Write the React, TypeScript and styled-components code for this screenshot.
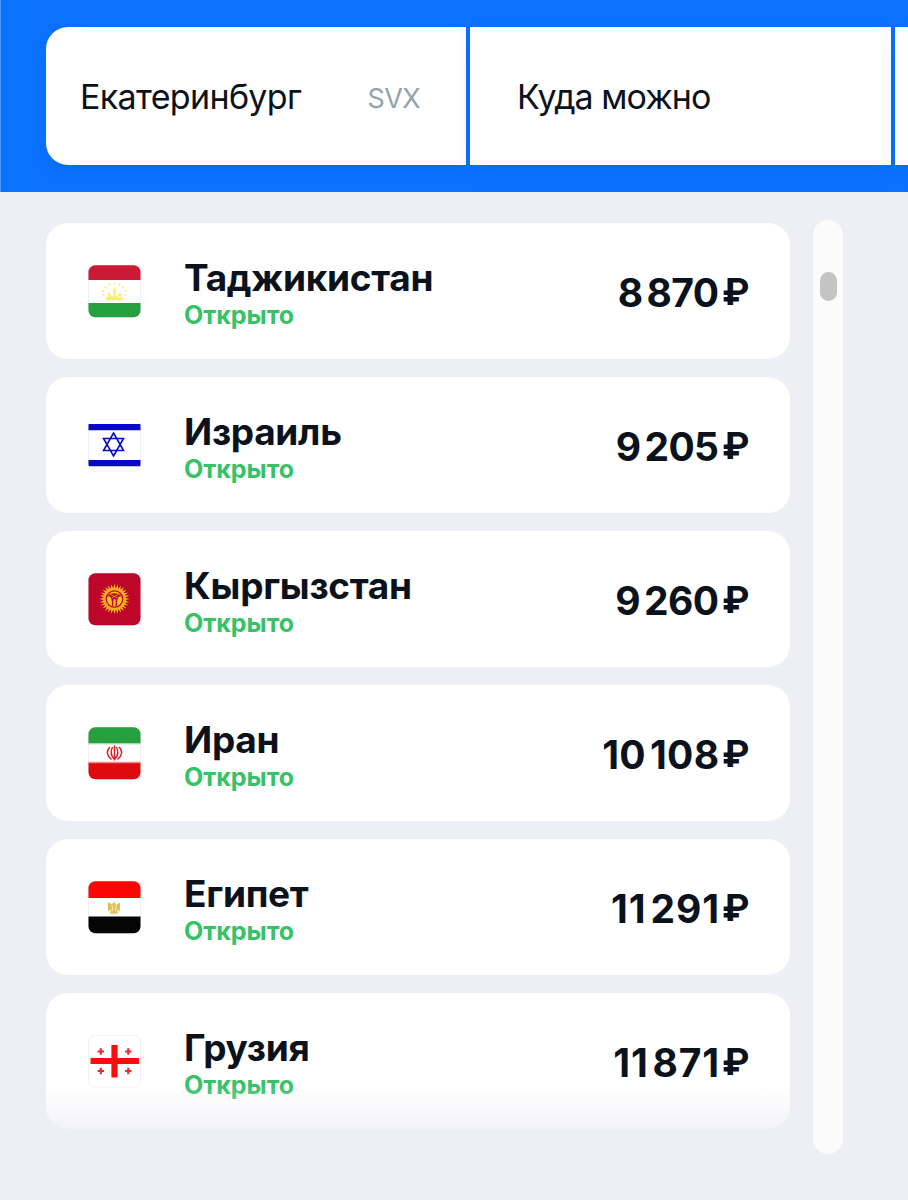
import React from "react";
import styled, { createGlobalStyle } from "styled-components";

const GlobalStyle = createGlobalStyle`
  * { box-sizing: border-box; }
  body {
    margin: 0;
    overflow: hidden;
    background: #eeeff4;
    font-family: Inter, "Liberation Sans", sans-serif;
    color: #0b121c;
  }
`;

const Page = styled.div`
  width: 908px;
  height: 1200px;
  overflow: hidden;
  display: flex;
  flex-direction: column;
  background: #eeeff4;
`;

const SearchBar = styled.header`
  flex: none;
  display: flex;
  gap: 4px;
  height: 192px;
  padding: 27px 0 27px 45px;
  background: #0b72ff;
  border-left: 1px solid #4c9aff;
  overflow: hidden;
`;

const Field = styled.div<{ $first?: boolean; $inset: number }>`
  flex: none;
  width: ${(p) => (p.$first ? 420 : 421)}px;
  height: 138px;
  padding: 2px 46px 0 ${(p) => p.$inset}px;
  display: flex;
  align-items: center;
  justify-content: space-between;
  background: #fff;
  border-radius: ${(p) => (p.$first ? "22px 0 0 22px" : "0")};
  box-shadow: 0 8px 18px -4px rgba(10, 70, 150, 0.2);
`;

const FieldText = styled.span<{ $spacing: number }>`
  font-size: 34px;
  line-height: 40px;
  letter-spacing: ${(p) => p.$spacing}px;
  white-space: nowrap;
`;

const AirportCode = styled.span`
  padding-top: 3px;
  font-size: 27px;
  line-height: 32px;
  letter-spacing: -0.6px;
  color: #92a3ad;
`;

const Content = styled.main`
  display: flex;
  align-items: flex-start;
  gap: 23px;
  padding: 28px 0 0 46px;
`;

const List = styled.ul`
  position: relative;
  width: 744px;
  margin: 0;
  padding: 3px 0 16px;
  list-style: none;
  display: flex;
  flex-direction: column;
  gap: 18px;
`;

const BottomFade = styled.div`
  position: absolute;
  left: 0;
  right: 0;
  bottom: 0;
  height: 60px;
  background: linear-gradient(
    rgba(238, 239, 244, 0),
    rgba(238, 239, 244, 0.3) 35%,
    rgba(238, 239, 244, 0.72) 73%,
    #eeeff4
  );
`;

const Card = styled.li`
  display: flex;
  align-items: center;
  height: 136px;
  padding: 0 41px 0 42px;
  background: #fff;
  border-radius: 22px;
`;

const Flag = styled.svg`
  flex: none;
  width: 53px;
  height: 53px;
`;

const Country = styled.div`
  flex: 1;
  padding: 3px 0 0 43px;
  display: flex;
  flex-direction: column;
`;

const Name = styled.span`
  font-size: 37px;
  line-height: 44px;
  font-weight: 650;
  letter-spacing: -0.3px;
`;

const Status = styled.span`
  font-size: 25px;
  line-height: 30px;
  font-weight: 660;
  letter-spacing: 0;
  color: #37c268;
`;

const Price = styled.div`
  display: flex;
  align-items: center;
  padding-top: 3px;
  font-size: 39px;
  line-height: 46px;
  font-weight: 700;
  white-space: nowrap;
`;

const Digits = styled.span<{ $spacing: number }>`
  letter-spacing: ${(p) => p.$spacing}px;
  margin-right: ${(p) => 3 - p.$spacing}px;
`;

const Group = styled.span`
  margin-right: 4px;
`;

const Ruble = styled.span`
  padding-bottom: 1px;
  font-size: 37px;
  line-height: 44px;
  letter-spacing: -0.5px;
`;

const Track = styled.div`
  width: 30px;
  height: 934px;
  padding: 52px 6px 0 7px;
  border-radius: 15px;
  background: #fbfbfc;
`;

const Thumb = styled.div`
  width: 17px;
  height: 29px;
  border-radius: 9px;
  background: #c4c4c5;
`;

const Stripes = ({ colors, heights }: { colors: string[]; heights: number[] }) => {
  let y = 0;
  return (
    <>
      {colors.map((c, i) => {
        const top = y;
        y += heights[i];
        return <rect key={i} x="0" y={top} width="53" height={heights[i]} fill={c} />;
      })}
    </>
  );
};

const Tajikistan = () => (
  <>
    <Stripes colors={["#cb1a36", "#fff", "#27a03f"]} heights={[15, 23, 15]} />
    <g fill="#f8f070">
      <path d="M18 32q8-2 17 0l-.5 3.500q-8-1-16 0zM25 25l1.500-3 1.500 3-.5 7h-2zM19.500 28q3-1 4 4l-3 .5zM33.500 28q-3-1-4 4l3 .5z" />
      {[[15.5, 30], [15, 26], [17.5, 22], [21.5, 19.5], [26.5, 18.5], [31.5, 19.5], [35.5, 22], [38, 26], [37.5, 30]].map(
        ([x, y]) => <circle key={`${x}-${y}`} cx={x} cy={y} r="1.1" />
      )}
    </g>
  </>
);

const Israel = () => (
  <>
    <Stripes colors={["#fff", "#0909c4", "#fff", "#0909c4", "#fff"]} heights={[5, 6.5, 29.5, 6.5, 5.5]} />
    <path d="M25.500 14l10 17.500h-20zM25.500 37l10-17.500h-20z" fill="none" stroke="#0909c4" strokeWidth="1.6" />
  </>
);

const rays = Array.from({ length: 28 }, (_, i) => (i * 360) / 28);

const Kyrgyzstan = () => (
  <>
    <rect width="53" height="53" fill="#bd0629" />
    <g transform="translate(26.500 26)">
      {rays.map((a) => (
        <path key={a} d="M-1.300-10L0-15.200 1.300-10z" fill="#f5bd20" transform={`rotate(${a})`} />
      ))}
      <circle r="11.300" fill="#f2ac1e" />
      <circle r="8.800" fill="#bd0629" />
      <circle r="7.600" fill="#f9c322" />
      <path
        d="M-7.300-2.500C-5-7 5-7 7.300-2.500 4-3.500 2.500-1 2.500 6.500L1 7.300C1.500 1 1 0 0 0S-1.500 1-1 7.300L-2.500 6.500C-2.500-1-4-3.500-7.300-2.500z"
        fill="#bd0629"
      />
      <path d="M-4-4.500L3-1M4-4.500L-3-1" stroke="#f9a022" strokeWidth="0.8" />
    </g>
  </>
);

const Iran = () => (
  <>
    <Stripes colors={["#27a040", "#fff", "#dd0a0e"]} heights={[16.5, 19, 17.5]} />
    <path d="M0 16.800h53" stroke="#9bd3a5" strokeWidth="1.6" strokeDasharray="1.4 0.8" />
    <path d="M0 35.400h53" stroke="#f09a9c" strokeWidth="1.6" strokeDasharray="1.4 0.8" />
    <path
      d="M26.500 18.500v15M22 20q-6 6 1.500 12.500M31 20q6 6-1.500 12.500M24.500 20q-3.500 7 2 12.500 5.500-5.500 2-12.500"
      fill="none"
      stroke="#dd1a1e"
      strokeWidth="1.4"
    />
  </>
);

const Egypt = () => (
  <>
    <Stripes colors={["#fb0505", "#fff", "#050505"]} heights={[17, 18.5, 17.5]} />
    <path
      d="M20 21l4 2.500 1-2h2l1 2.500 4-2.500v9l-3-2 1 4.500h-8l1-4.500-3 2z"
      fill="#dfc05a"
    />
    <path d="M24 24l.5 6M28 24l-.5 6M23 33h7" stroke="#f5ebca" strokeWidth="1" />
  </>
);

const Georgia = () => (
  <>
    <rect width="53" height="53" fill="#fff" />
    <path d="M2.500 26h48.500M26.500 10v32.500" stroke="#fb0d0d" strokeWidth="6.2" />
    {[[12.8, 16.5], [40.3, 16.5], [12.8, 36], [40.3, 36]].map(([x, y]) => (
      <path key={`${x}-${y}`} d={`M${x - 3.2} ${y}h6.400M${x} ${y - 3.2}v6.400`} stroke="#ef2a35" strokeWidth="2.2" />
    ))}
  </>
);

interface Destination {
  name: string;
  thousands: string;
  rest: string;
  priceSpacing: number;
  flag: React.FC;
}

const destinations: Destination[] = [
  { name: "Таджикистан", thousands: "8", rest: "870", priceSpacing: -0.6, flag: Tajikistan },
  { name: "Израиль", thousands: "9", rest: "205", priceSpacing: -0.6, flag: Israel },
  { name: "Кыргызстан", thousands: "9", rest: "260", priceSpacing: -0.6, flag: Kyrgyzstan },
  { name: "Иран", thousands: "10", rest: "108", priceSpacing: 0.3, flag: Iran },
  { name: "Египет", thousands: "11", rest: "291", priceSpacing: 0.9, flag: Egypt },
  { name: "Грузия", thousands: "11", rest: "871", priceSpacing: 0.8, flag: Georgia },
];

export default function App() {
  return (
    <Page>
      <GlobalStyle />
      <SearchBar>
        <Field $first $inset={34}>
          <FieldText $spacing={-0.65}>Екатеринбург</FieldText>
          <AirportCode>SVX</AirportCode>
        </Field>
        <Field $inset={47}>
          <FieldText $spacing={-0.95}>Куда можно</FieldText>
        </Field>
        <Field $inset={46} />
      </SearchBar>
      <Content>
        <List>
          {destinations.map(({ name, thousands, rest, priceSpacing, flag: Art }, i) => (
            <Card key={name}>
              <Flag viewBox="0 0 53 53">
                <clipPath id={`flag-${i}`}>
                  <rect x="0.5" y="0.2" width="52" height="52" rx="7" />
                </clipPath>
                <g clipPath={`url(#flag-${i})`}>
                  <Art />
                </g>
                <rect x="0.5" y="0.2" width="52" height="52" rx="7" fill="none" stroke="#000" strokeOpacity="0.06" />
              </Flag>
              <Country>
                <Name>{name}</Name>
                <Status>Открыто</Status>
              </Country>
              <Price>
                <Digits $spacing={priceSpacing}>
                  <Group>{thousands}</Group>
                  {rest}
                </Digits>
                <Ruble>₽</Ruble>
              </Price>
            </Card>
          ))}
          <BottomFade />
        </List>
        <Track>
          <Thumb />
        </Track>
      </Content>
    </Page>
  );
}
